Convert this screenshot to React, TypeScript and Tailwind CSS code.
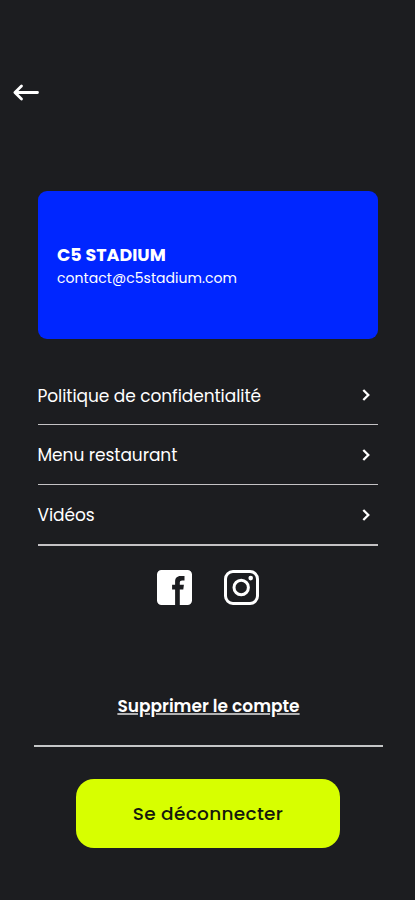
import React from "react"

interface IMenuLink {
	key: string
	label: string
	className: string
}

const MENU_LINKS: IMenuLink[] = [
	{
		key: "privacy",
		label: "Politique de confidentialité",
		className: "h-[59.5px] border-b-[1.5px]",
	},
	{
		key: "menu",
		label: "Menu restaurant",
		className: "h-[60px] border-b-[1.5px]",
	},
	{
		key: "videos",
		label: "Vidéos",
		className: "h-[61px] border-b-2",
	},
]

const BackIcon = () => (
	<svg
		className="h-[18px] w-[28px]"
		viewBox="0 0 28 18"
		fill="none"
		stroke="currentColor"
		strokeWidth="2.8"
		strokeLinecap="round"
		strokeLinejoin="round"
	>
		<path d="M25.5 9.5H3M9.5 3 2.9 9.5l6.6 6.5" />
	</svg>
)

const ChevronIcon = () => (
	<svg
		className="h-[14px] w-[10px]"
		viewBox="0 0 10 14"
		fill="none"
		stroke="currentColor"
		strokeWidth="2.3"
	>
		<path d="m2.3 2 5 5-5 5" />
	</svg>
)

const FacebookIcon = () => (
	<svg className="size-[35px]" viewBox="0 0 35 35" fill="currentColor">
		<path d="M4.5 0h26A4.5 4.5 0 0 1 35 4.5v26a4.5 4.5 0 0 1-4.5 4.5h-7.700V19.500h3.500l.6-4.700h-4.100v-2.100c0-1.500.8-2.200 2.300-2.200h2.400V6h-3.900c-3.700 0-5.500 2.200-5.500 5.700v3.100h-3v4.700h3V35H4.500A4.500 4.500 0 0 1 0 30.500v-26A4.500 4.500 0 0 1 4.500 0Z" />
	</svg>
)

const InstagramIcon = () => (
	<svg className="size-[35px]" viewBox="0 0 35 35" fill="none" stroke="currentColor">
		<rect x="1.5" y="1.5" width="32" height="32" rx="7.5" strokeWidth="3" />
		<circle cx="17.2" cy="17.5" r="7.2" strokeWidth="3" />
		<circle cx="26.7" cy="8.1" r="2.3" fill="currentColor" stroke="none" />
	</svg>
)

const App: React.FC = () => {
	return (
		<main className="flex h-[900px] w-full flex-col overflow-hidden bg-[#1c1d20] font-[Poppins,Inter,sans-serif] text-white">
			<header className="flex h-[190.5px] items-start px-3 pt-[83px]">
				<button type="button" aria-label="Retour">
					<BackIcon />
				</button>
			</header>

			<section className="mx-[37.5px] flex h-[148px] w-[340.5px] flex-col justify-center rounded-[9px] bg-[#0026ff] pt-[3px] pl-[19.5px]">
				<h1 className="text-[17.5px] leading-[24.5px] font-bold">
					C5 STADIUM
				</h1>
				<p className="text-[14px] leading-[22px] tracking-[0.05px]">
					contact@c5stadium.com
				</p>
			</section>

			<nav className="mx-[37.5px] mt-[27px] w-[340.5px]">
				{MENU_LINKS.map(link => (
					<a
						key={link.key}
						href="#"
						className={`flex items-center justify-between border-[#c4c2c4] pr-[7.5px] text-[17px] tracking-[-0.06px] ${link.className}`}
					>
						<span className="pt-[3px]">{link.label}</span>
						<ChevronIcon />
					</a>
				))}
			</nav>

			<div className="mt-[23.5px] ml-[157px] flex gap-8">
				<a href="#" aria-label="Facebook">
					<FacebookIcon />
				</a>
				<a href="#" aria-label="Instagram">
					<InstagramIcon />
				</a>
			</div>

			<div className="mx-[34px] mt-[86px] flex h-[56px] w-[349px] items-start justify-center border-b-2 border-[#c4c6c7]">
				<button
					type="button"
					className="pt-px text-[17px] leading-7 font-semibold underline decoration-[#b0b0b1] decoration-2 underline-offset-1"
				>
					Supprimer le compte
				</button>
			</div>

			<button
				type="button"
				className="mt-8 ml-[76px] h-[69px] w-[264px] rounded-[18px] bg-[#d7ff00] pt-0.5 text-[18.5px] font-medium tracking-[0.3px] text-[#15180c]"
			>
				Se déconnecter
			</button>
		</main>
	)
}

export default App
